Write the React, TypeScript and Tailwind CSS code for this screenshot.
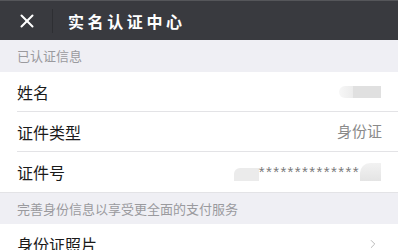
import { X, ChevronRight } from "lucide-react";

const font = { fontFamily: '"Noto Sans CJK SC", "Noto Sans", sans-serif' };

function Row({ label, children, last }: { label: string; children?: React.ReactNode; last?: boolean }) {
  return (
    <div className="bg-white pl-[17px]">
      <div className={`h-[40px] flex items-center justify-between pr-[16px] ${last ? "" : "border-b border-[#e3e3e6]"}`}>
        <span className="text-[16px] text-[#1a1a1a]">{label}</span>
        {children}
      </div>
    </div>
  );
}

export default function App() {
  return (
    <div className="w-[398px] h-[250px] overflow-hidden bg-[#efeff4]" style={font}>
      {/* top bar */}
      <div className="h-[40px] bg-[#393a3f] border-t border-[#55565a] flex items-center">
        <div className="w-[52px] flex justify-center pl-[1px]">
          <X className="w-[22px] h-[22px] text-white" strokeWidth={2.2} />
        </div>
        <div className="w-px h-[24px] bg-[#2e2f33]" />
        <span className="ml-[15px] text-white text-[16px] font-bold tracking-[3.6px]">实名认证中心</span>
      </div>

      <div className="h-[32px] flex items-center px-[17px] text-[13px] text-[#9a9a9e]">已认证信息</div>

      <Row label="姓名">
        <div className="flex items-center mr-[1px]">
          <div className="w-[14px] h-[12px] rounded-l-full bg-gradient-to-r from-[#f7f7f7] to-[#ececec]" />
          <div className="w-[28px] h-[12px] bg-[#e0e0e0]" />
        </div>
      </Row>
      <Row label="证件类型">
        <span className="text-[15px] text-[#8a8a8a]">身份证</span>
      </Row>
      <Row label="证件号" last>
        <div className="flex items-center mr-[1px]">
          <div className="w-[25px] h-[13px] mt-[4px] bg-[#ebebeb] rounded-tl-[6px]" />
          <span className="text-[15px] leading-[15px] text-[#7a7a7a] tracking-[1.4px] -mt-[2px]" style={{ fontFamily: '"Liberation Sans", sans-serif' }}>
            **************
          </span>
          <div className="w-[21px] h-[18px] bg-gradient-to-b from-[#f2f2f2] to-[#e4e4e4] rounded-tl-[10px]" />
        </div>
      </Row>

      <div className="h-[32px] flex items-center px-[17px] text-[13px] text-[#9a9a9e] border-t border-[#e3e3e6]">
        完善身份信息以享受更全面的支付服务
      </div>

      <Row label="身份证照片" last>
        <ChevronRight className="w-[14px] h-[14px] text-[#b5b5b5] mr-[2px]" strokeWidth={1.6} />
      </Row>
    </div>
  );
}
